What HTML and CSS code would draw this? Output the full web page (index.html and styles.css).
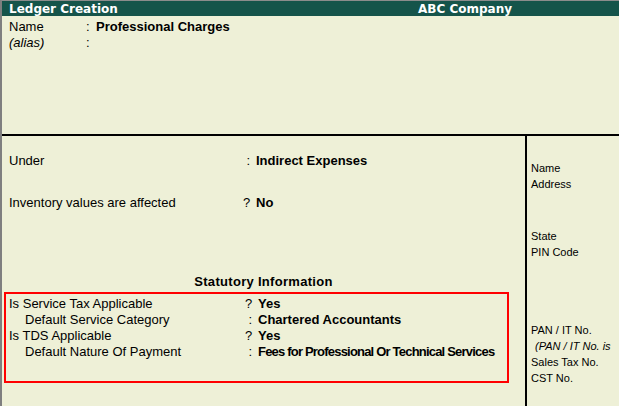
FILE: index.html
```html
<!DOCTYPE html>
<html lang="en">
<head>
    <meta charset="UTF-8">
    <title>Ledger Creation</title>
    <link rel="stylesheet" href="styles.css">
</head>
<body>
    <div class="window">
        <header class="titlebar">
            <span class="title">Ledger Creation</span>
            <span class="company">ABC Company</span>
        </header>

        <section class="top">
            <div class="name-grid">
                <span>Name</span><span>:</span><b>Professional Charges</b>
                <span class="alias">(alias)</span><span>:</span><b></b>
            </div>
        </section>

        <section class="bottom">
            <div class="main">
                <div class="row under">
                    <span>Under</span><span class="mark">:</span><b>Indirect Expenses</b>
                </div>
                <div class="row inventory">
                    <span>Inventory values are affected</span><span class="mark">?</span><b>No</b>
                </div>

                <h2 class="stat-title">Statutory Information</h2>
                <div class="stat-box">
                    <div class="row">
                        <span>Is Service Tax Applicable</span><span class="mark">?</span><b>Yes</b>
                    </div>
                    <div class="row">
                        <span class="sub">Default Service Category</span><span class="mark">:</span><b>Chartered Accountants</b>
                    </div>
                    <div class="row">
                        <span>Is TDS Applicable</span><span class="mark">?</span><b>Yes</b>
                    </div>
                    <div class="row">
                        <span class="sub">Default Nature Of Payment</span><span class="mark">:</span><b class="squeeze">Fees for Professional Or Technical Services</b>
                    </div>
                </div>
            </div>

            <aside class="side">
                <div class="group address">
                    <div>Name</div>
                    <div>Address</div>
                </div>
                <div class="group state">
                    <div>State</div>
                    <div>PIN Code</div>
                </div>
                <div class="group tax">
                    <div>PAN / IT No.</div>
                    <div class="note">(PAN / IT No. is</div>
                    <div>Sales Tax No.</div>
                    <div>CST No.</div>
                </div>
            </aside>
        </section>
    </div>
</body>
</html>
```

FILE: styles.css
```css
body {
    margin: 0;
    padding: 0;
    background-color: #eef0d7;
    font-family: 'Liberation Sans', Arial, sans-serif;
    font-size: 13px;
    color: #000000;
    overflow: hidden;
}
.window {
    height: 405px;
    border-top: 1px solid #8c8c8c;
    border-left: 2px solid #7f7f7f;
    display: flex;
    flex-direction: column;
}

/* title bar */
.titlebar {
    display: flex;
    height: 15px;
    background-color: #15544a;
    color: #ffffff;
    font-family: 'DejaVu Sans', Verdana, sans-serif;
    font-weight: bold;
    font-size: 12px;
    line-height: 16px;
}
.title {
    width: 409px;
    padding-left: 7px;
}

/* name / alias */
.top {
    height: 115px;
    padding: 3px 0 0 7px;
}
.name-grid {
    display: grid;
    grid-template-columns: 77px 10px auto;
    line-height: 16px;
}
.alias {
    font-style: italic;
}

.bottom {
    flex: 1;
    display: flex;
    border-top: 2px solid #000000;
}
.main {
    width: 516px;
    padding: 17px 0 0 7px;
    border-right: 2px solid #000000;
}
.row {
    display: grid;
    grid-template-columns: 234px 13px auto;
    line-height: 16px;
    white-space: nowrap;
}
.mark {
    text-align: right;
    padding-right: 6px;
}
.inventory {
    margin-top: 26px;
}
.stat-title {
    margin: 63px 0 2px -7px;
    font-size: 13px;
    line-height: 16px;
    letter-spacing: 0.3px;
    text-align: center;
}
.stat-box {
    width: 498px;
    margin-left: -5px;
    padding: 2px 0 21px 3px;
    border: 2px solid #ff0000;
}
.stat-box .row {
    grid-template-columns: 236px 13px auto;
}
.sub {
    padding-left: 16px;
}
.squeeze {
    letter-spacing: -0.8px;
}

/* right panel */
.side {
    flex: 1;
    padding: 24px 0 0 4px;
    font-size: 11px;
    line-height: 16px;
    white-space: nowrap;
    overflow: hidden;
}
.state {
    margin-top: 36px;
}
.tax {
    margin-top: 62px;
}
.note {
    font-style: italic;
    padding-left: 4px;
}
```
